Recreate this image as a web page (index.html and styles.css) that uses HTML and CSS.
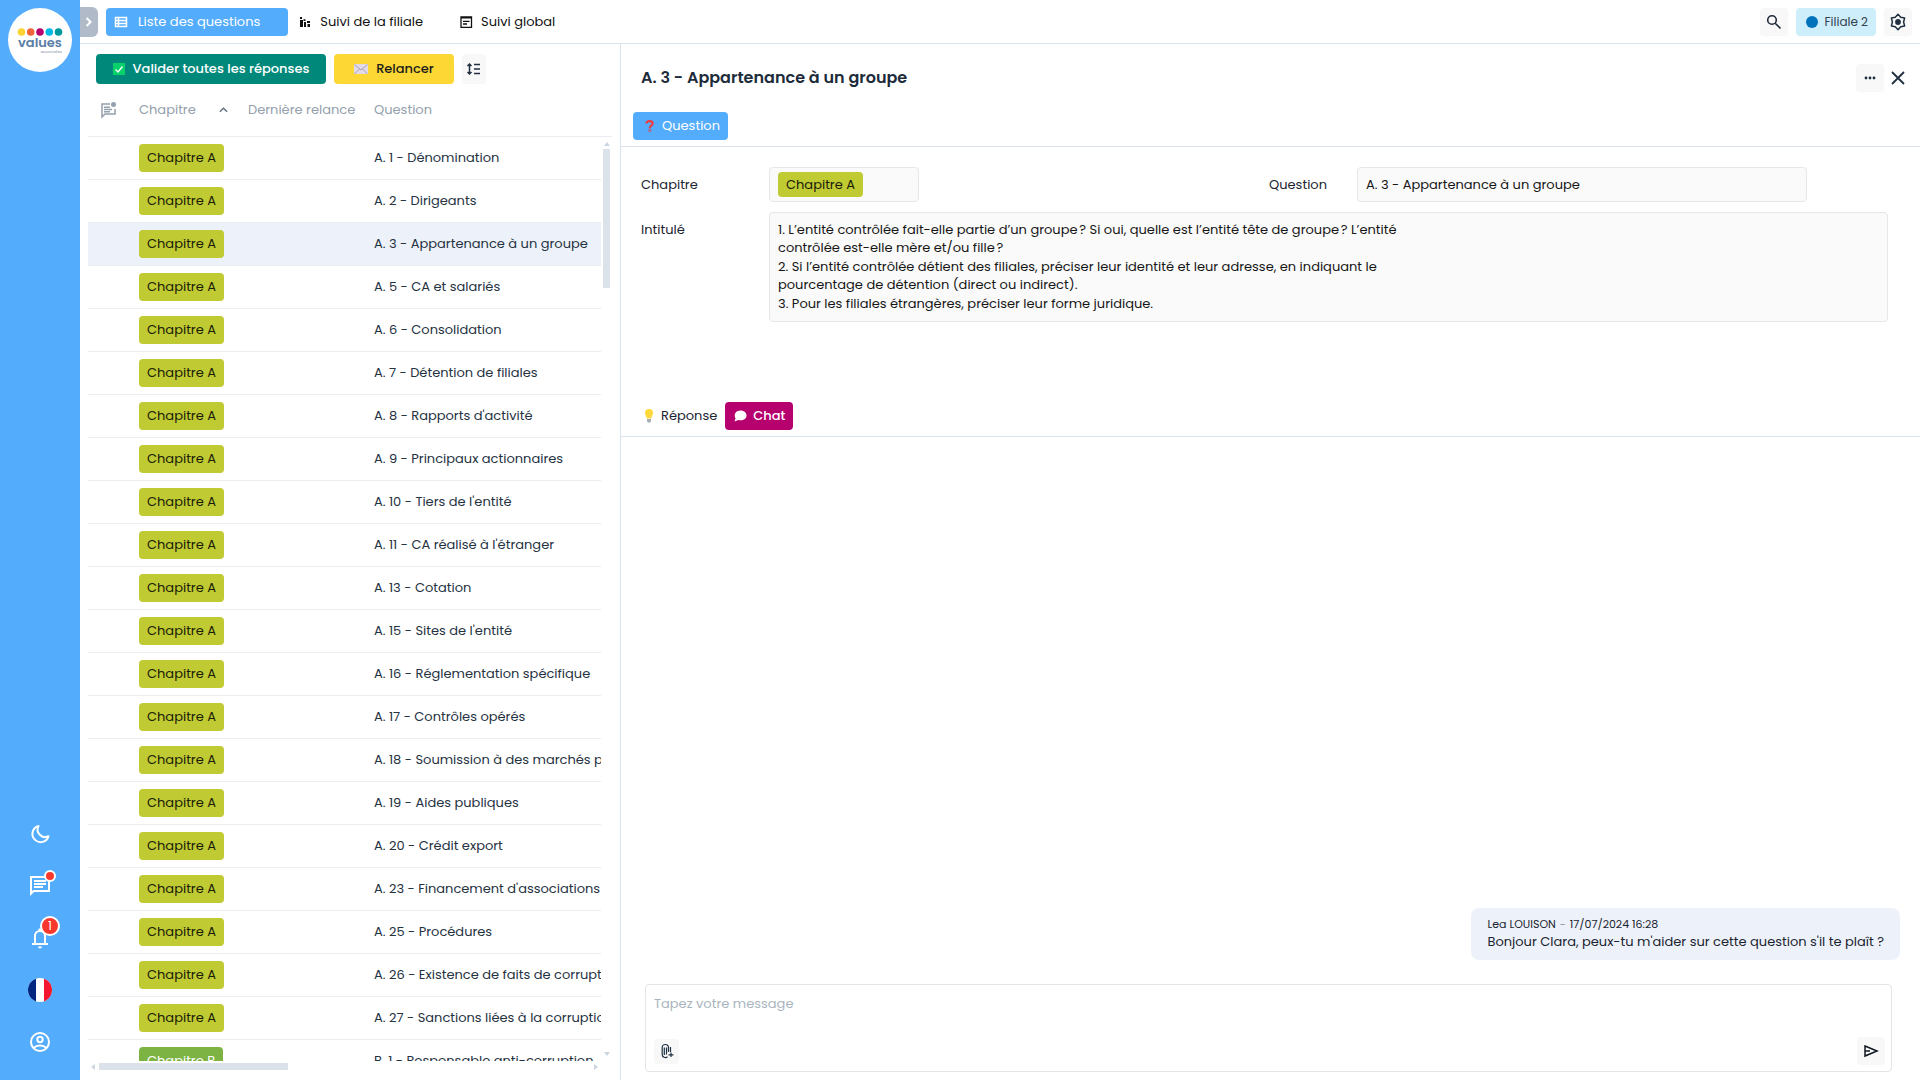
FILE: index.html
```html
<!DOCTYPE html>
<html lang="fr">
<head>
<meta charset="utf-8">
<title>Liste des questions</title>
<link rel="stylesheet" href="styles.css">
</head>
<body>
<div class="app">
  <aside class="rail">
    <a class="logo" href="#" aria-label="values associates">
      <svg viewBox="0 0 64 64" width="64" height="64">
        <circle cx="32" cy="32" r="32" fill="#fff"/>
        <circle cx="13.500" cy="24" r="3.800" fill="#fbd433"/><circle cx="22.700" cy="24" r="3.800" fill="#f0643c"/><circle cx="32" cy="24" r="3.800" fill="#b5006e"/><circle cx="41.300" cy="24" r="3.800" fill="#00b9e4"/><circle cx="50.500" cy="24" r="3.800" fill="#009a9c"/>
        <text x="32" y="39" class="logo-name">values</text>
        <text x="54" y="45" class="logo-sub">associates</text>
      </svg>
    </a>
    <nav class="rail-nav">
      <button class="rail-btn" aria-label="Mode sombre"><svg viewBox="0 0 24 24" width="24" height="24" fill="none" stroke="#fff" stroke-width="2"><path d="M10.500 4a8.200 8.200 0 1 0 10 10.200A7.500 7.500 0 0 1 10.500 4z" stroke-linejoin="round"/></svg></button>
      <button class="rail-btn" aria-label="Messages"><svg viewBox="0 0 24 24" width="24" height="24" fill="#fff"><path d="M4 4h16v12H5.200L4 17.200zM2 2v20l4-4h16V2zM6 12h9v2H6zm0-3h12v2H6zm0-3h12v2H6z" fill-rule="evenodd"/></svg><span class="dot"></span></button>
      <button class="rail-btn" aria-label="Notifications"><svg viewBox="0 0 24 24" width="24" height="24" fill="#fff"><path fill-rule="evenodd" d="M4 19v-2h2v-7a6 6 0 0 1 4.500-5.800V2.500h3v1.700A6 6 0 0 1 18 10v7h2v2zm4-2h8v-7a4 4 0 0 0-8 0zm2 3.500h4a2 2 0 0 1-4 0z"/></svg><span class="count">1</span></button>
      <button class="rail-btn" aria-label="Langue"><svg viewBox="0 0 24 24" width="24" height="24"><clipPath id="flag"><circle cx="12" cy="12" r="12"/></clipPath><g clip-path="url(#flag)"><path fill="#fff" d="M0 0h24v24H0z"/><path fill="#00267f" d="M0 0h8v24H0z"/><path fill="#f31830" d="M16 0h8v24h-8z"/></g></svg></button>
      <button class="rail-btn" aria-label="Compte"><svg viewBox="0 0 24 24" width="24" height="24" fill="none" stroke="#fff" stroke-width="2"><circle cx="12" cy="12" r="9"/><circle cx="12" cy="9.500" r="2.700"/><path d="M5.500 18c3.500-3.200 9.500-3.200 13 0"/></svg></button>
    </nav>
  </aside>
  <div class="main">
    <header class="topbar">
      <button class="expand" aria-label="Ouvrir le menu"><svg viewBox="0 0 10 14" width="8" height="12" fill="none" stroke="#fff" stroke-width="2.400"><path d="M2 2l5 5-5 5"/></svg></button>
      <nav class="tabs">
        <a class="tab tab-active" href="#"><svg viewBox="0 0 14 14" width="14" height="14" fill="none" stroke="#fff" stroke-width="1.500"><path d="M1.500 2.500h11v9h-11zM1.500 5.500h11M1.500 8.500h11M4.500 2.500v9"/></svg>Liste des questions</a>
        <a class="tab" href="#"><svg viewBox="0 0 14 14" width="14" height="14" fill="#111"><path d="M2 5h3v7H2zM6 7h2v5H6zM9.500 9H12v3H9.500zM2 2h2v2H2zM5.500 4.200h2v1.800h-2zM9 6h3v2H9z"/></svg>Suivi de la filiale</a>
        <a class="tab" href="#"><svg viewBox="0 0 14 14" width="14" height="14" fill="none" stroke="#111" stroke-width="1.300"><path d="M2 2h10.500v10.300H2zM2 2.900h10.500M4 6.300h6.500M4 9h4"/></svg>Suivi global</a>
      </nav>
      <div class="top-tools">
        <button class="icon-btn" aria-label="Rechercher"><svg viewBox="0 0 16 16" width="16" height="16" fill="none" stroke="#1f2937" stroke-width="1.600"><circle cx="6" cy="6" r="4.300"/><path d="M9.200 9.200L14.500 14.500"/></svg></button>
        <button class="branch"><i></i>Filiale 2</button>
        <button class="icon-btn" aria-label="Paramètres"><svg viewBox="0 0 18 18" width="18" height="18" fill="none" stroke="#1f2f3f" stroke-width="1.500" stroke-linejoin="round"><path d="M9 1.300l2.700 2.900 3.900.9-1 3.900 1 3.900-3.900.9L9 16.700l-2.700-2.900-3.900-.9 1-3.900-1-3.900 3.900-.9z"/><circle cx="9" cy="9" r="2.900" fill="#1f2f3f" stroke="none"/></svg></button>
      </div>
    </header>
    <div class="panes">
      <section class="list">
        <div class="actions">
          <button class="btn validate"><svg viewBox="0 0 12 14" width="12" height="14"><path fill="#06d16a" d="M0 1h12v12H0z"/><path d="M2.500 7.500L5 10l4.500-5.500" fill="none" stroke="#fff" stroke-width="1.300"/></svg>Valider toutes les réponses</button>
          <button class="btn remind"><svg viewBox="0 0 14 12" width="14" height="12"><path fill="#e2dae6" d="M0 1h14v10H0z"/><path d="M.5 1.500L7 7l6.500-5.500M.5 11l5-5m3 0l5 5" fill="none" stroke="#9b92a3" stroke-width=".8"/></svg>Relancer</button>
          <button class="icon-btn" aria-label="Hauteur des lignes"><svg viewBox="0 0 16 14" width="16" height="14" fill="none" stroke="#222f3e" stroke-width="1.500"><path d="M3.500 2v10M1.500 4l2-2 2 2M1.500 10l2 2 2-2M8 2.500h6M8 7h6M8 11.500h6"/></svg></button>
        </div>
        <div class="table-box">
        <table class="grid">
          <thead><tr>
            <th class="c-msg"><svg viewBox="0 0 18 18" width="18" height="18" fill="none" stroke="#94a0ab" stroke-width="1.500"><path d="M11 3H3v13l3-3h10V8M5 6.300h6M5 8.500h8M5 10.700h6"/><circle cx="14.500" cy="3.500" r="2.500" fill="#94a0ab" stroke="none"/></svg></th>
            <th class="c-chap"><span>Chapitre <svg viewBox="0 0 10 6" width="9" height="6" fill="none" stroke="#607080" stroke-width="1.600"><path d="M1 5l4-4 4 4"/></svg></span></th>
            <th class="c-last">Dernière relance</th>
            <th class="c-q">Question</th>
          </tr></thead>
          <tbody>
            <tr><td></td><td><b class="chip">Chapitre A</b></td><td></td><td>A. 1 - Dénomination</td></tr>
            <tr><td></td><td><b class="chip">Chapitre A</b></td><td></td><td>A. 2 - Dirigeants</td></tr>
            <tr class="selected"><td></td><td><b class="chip">Chapitre A</b></td><td></td><td>A. 3 - Appartenance à un groupe</td></tr>
            <tr><td></td><td><b class="chip">Chapitre A</b></td><td></td><td>A. 5 - CA et salariés</td></tr>
            <tr><td></td><td><b class="chip">Chapitre A</b></td><td></td><td>A. 6 - Consolidation</td></tr>
            <tr><td></td><td><b class="chip">Chapitre A</b></td><td></td><td>A. 7 - Détention de filiales</td></tr>
            <tr><td></td><td><b class="chip">Chapitre A</b></td><td></td><td>A. 8 - Rapports d'activité</td></tr>
            <tr><td></td><td><b class="chip">Chapitre A</b></td><td></td><td>A. 9 - Principaux actionnaires</td></tr>
            <tr><td></td><td><b class="chip">Chapitre A</b></td><td></td><td>A. 10 - Tiers de l'entité</td></tr>
            <tr><td></td><td><b class="chip">Chapitre A</b></td><td></td><td>A. 11 - CA réalisé à l'étranger</td></tr>
            <tr><td></td><td><b class="chip">Chapitre A</b></td><td></td><td>A. 13 - Cotation</td></tr>
            <tr><td></td><td><b class="chip">Chapitre A</b></td><td></td><td>A. 15 - Sites de l'entité</td></tr>
            <tr><td></td><td><b class="chip">Chapitre A</b></td><td></td><td>A. 16 - Réglementation spécifique</td></tr>
            <tr><td></td><td><b class="chip">Chapitre A</b></td><td></td><td>A. 17 - Contrôles opérés</td></tr>
            <tr><td></td><td><b class="chip">Chapitre A</b></td><td></td><td>A. 18 - Soumission à des marchés publics</td></tr>
            <tr><td></td><td><b class="chip">Chapitre A</b></td><td></td><td>A. 19 - Aides publiques</td></tr>
            <tr><td></td><td><b class="chip">Chapitre A</b></td><td></td><td>A. 20 - Crédit export</td></tr>
            <tr><td></td><td><b class="chip">Chapitre A</b></td><td></td><td>A. 23 - Financement d'associations</td></tr>
            <tr><td></td><td><b class="chip">Chapitre A</b></td><td></td><td>A. 25 - Procédures</td></tr>
            <tr><td></td><td><b class="chip">Chapitre A</b></td><td></td><td>A. 26 - Existence de faits de corruption</td></tr>
            <tr><td></td><td><b class="chip">Chapitre A</b></td><td></td><td>A. 27 - Sanctions liées à la corruption</td></tr>
            <tr><td></td><td><b class="chip chip-b">Chapitre B</b></td><td></td><td>B. 1 - Responsable anti-corruption</td></tr>
          </tbody>
        </table>
        <div class="vbar"><svg viewBox="0 0 6 4" width="6" height="4"><path fill="#ccd6e2" d="M0 4l3-4 3 4z"/></svg><i></i><svg viewBox="0 0 6 4" width="6" height="4"><path fill="#ccd6e2" d="M0 0l3 4 3-4z"/></svg></div>
        </div>
        <div class="hbar"><svg viewBox="0 0 4 6" width="4" height="6"><path fill="#ccd6e2" d="M4 0L0 3l4 3z"/></svg><i></i><svg viewBox="0 0 4 6" width="4" height="6"><path fill="#ccd6e2" d="M0 0l4 3-4 3z"/></svg></div>
      </section>
      <section class="detail">
        <div class="detail-head">
          <h1>A. 3 - Appartenance à un groupe</h1>
          <button class="icon-btn" aria-label="Plus"><svg viewBox="0 0 12 4" width="12" height="4" fill="#1f2f3f"><circle cx="2" cy="2" r="1.400"/><circle cx="6" cy="2" r="1.400"/><circle cx="10" cy="2" r="1.400"/></svg></button>
          <button class="icon-btn bare" aria-label="Fermer"><svg viewBox="0 0 14 14" width="14" height="14" fill="none" stroke="#1f2f3f" stroke-width="1.800"><path d="M1 1l12 12M13 1L1 13"/></svg></button>
        </div>
        <div class="sub-tabs">
          <button class="sub-tab blue"><svg viewBox="0 0 10 14" width="9" height="14" fill="none" stroke="#f03a3e" stroke-width="2.400"><path d="M1.500 4.200C1.500.700 8.500.700 8.500 4.200 8.500 6.500 5.300 6.500 5.300 9.500"/><circle cx="5.300" cy="12.200" r=".4"/></svg>Question</button>
        </div>
        <div class="form">
          <label class="f-label" for="chapitre">Chapitre</label>
          <output class="field" id="chapitre"><b class="chip">Chapitre A</b></output>
          <label class="f-label" for="question">Question</label>
          <input class="field" id="question" value="A. 3 - Appartenance à un groupe" readonly>
          <label class="f-label top" for="intitule">Intitulé</label>
          <output class="field long" id="intitule">
            <span>1. L’entité contrôlée fait-elle partie d’un groupe&#8239;? Si oui, quelle est l’entité tête de groupe&#8239;? L’entité<br>contrôlée est-elle mère et/ou fille&#8239;?</span>
            <span>2. Si l’entité contrôlée détient des filiales, préciser leur identité et leur adresse, en indiquant le<br>pourcentage de détention (direct ou indirect).</span>
            <span>3. Pour les filiales étrangères, préciser leur forme juridique.</span>
          </output>
        </div>
        <div class="sub-tabs reply">
          <button class="sub-tab plain"><svg viewBox="0 0 8 14" width="8" height="14"><path fill="#ffd93b" d="M4 0a4 4 0 0 1 4 4c0 2.500-1.500 3-1.800 5.500H1.800C1.500 7 0 6.500 0 4a4 4 0 0 1 4-4z"/><path fill="#a9adb5" d="M2 10h4v2.500L4 14l-2-1.500z"/></svg>Réponse</button>
          <button class="sub-tab pink"><svg viewBox="0 0 14 12" width="14" height="12"><path fill="#fff" d="M7.500.5c3.700 0 6 2.200 6 4.900s-2.300 4.900-6 4.900c-.8 0-1.500-.1-2.200-.3L1.500 11.500l1-3C.300 4 3.300.5 7.500.5z"/></svg>Chat</button>
        </div>
        <div class="chat">
          <article class="bubble">
            <div class="meta">Lea LOUISON <span>-</span> <time>17/07/2024 16:28</time></div>
            <p>Bonjour Clara, peux-tu m'aider sur cette question s'il te plaît ?</p>
          </article>
        </div>
        <form class="composer">
          <textarea placeholder="Tapez votre message" aria-label="Message" rows="1"></textarea>
          <div class="composer-tools">
            <button type="button" class="icon-btn small" aria-label="Joindre un fichier"><svg viewBox="0 0 14 16" width="14" height="16" fill="none" stroke="#1f2f3f" stroke-width="1.200"><path d="M6.500 4.500v7M4.300 12V4.500M2.200 4.500v7c0 2.800 3.500 3.800 5.300 2.300M2.200 4.500c0-4 6.300-4 6.300 0V9M10.500 4v5M11 9.500V14M8.500 11.800h5"/></svg></button>
            <button type="button" class="icon-btn" aria-label="Envoyer"><svg viewBox="0 0 16 14" width="16" height="14" fill="none" stroke="#101820" stroke-width="1.500"><path d="M2 2l12 5-12 5zM2 7h5"/></svg></button>
          </div>
        </form>
      </section>
    </div>
  </div>
</div>
</body>
</html>
```
FILE: styles.css
```css
* { box-sizing: border-box; }
body { margin: 0; font: 13px/18px Poppins, Inter, sans-serif; color: #1b2430; background: #fff; }
button { border: 0; background: none; padding: 0; font: inherit; color: inherit; cursor: pointer; display: flex; align-items: center; justify-content: center; }
a { color: inherit; text-decoration: none; }
svg { display: block; flex: none; }
.app { display: flex; height: 100vh; overflow: hidden; }

.rail { width: 80px; flex: none; background: #53acfc; display: flex; flex-direction: column; align-items: center; justify-content: space-between; padding: 8px 0 14px; }
.logo-name { font: 600 13px Poppins, Inter, sans-serif; fill: #5b7ea8; text-anchor: middle; }
.logo-sub { font: 4px Poppins, Inter, sans-serif; fill: #7d8fa8; text-anchor: end; }
.rail-nav { display: flex; flex-direction: column; gap: 4px; }
.rail-btn { width: 48px; height: 48px; position: relative; }
.dot, .count { position: absolute; border: 2px solid #fff; border-radius: 50%; background: #f8382c; color: #fff; }
.dot { width: 12px; height: 12px; left: 28px; top: 8px; }
.count { width: 20px; height: 20px; left: 24px; top: 2px; font-size: 12px; line-height: 16px; text-align: center; }

.main { flex: 1; min-width: 0; display: flex; flex-direction: column; }
.topbar { height: 44px; flex: none; display: flex; align-items: flex-start; border-bottom: 1px solid #dbe3ec; padding: 7px 8px 0 0; }
.expand { width: 18px; height: 30px; background: #b1bac8; border-radius: 0 6px 6px 0; }
.tabs { display: flex; padding-left: 8px; margin-top: 1px; }
.tab { height: 28px; display: flex; align-items: center; gap: 8px; padding: 0 26px 0 10px; border-radius: 4px; color: #111; }
.tab-active { background: #53acfc; color: #fff; padding: 0 28px 0 8px; gap: 10px; }
.top-tools { margin: 1px 0 0 auto; display: flex; gap: 8px; }
.icon-btn { width: 28px; height: 28px; border-radius: 4px; background: #f8f8f9; flex: none; }
.icon-btn.bare { background: none; }
.icon-btn.small { width: 25px; height: 25px; }
.branch { height: 28px; padding: 0 8px 0 10px; gap: 6px; border-radius: 4px; background: #cdeefa; font-size: 12px; color: #33404d; }
.branch i { width: 12px; height: 12px; border-radius: 50%; background: #0072bc; }

.panes { flex: 1; min-height: 0; display: flex; }
.list { width: 540px; flex: none; display: flex; flex-direction: column; padding: 10px 8px 8px 8px; }
.actions { display: flex; gap: 8px; padding-left: 8px; }
.actions .icon-btn { height: 30px; width: 24px; }
.btn { height: 30px; border-radius: 4px; gap: 8px; font-weight: 500; }
.validate { width: 230px; background: #00897b; color: #fff; }
.remind { width: 120px; background: #fdd835; color: #1c1c1c; }
.table-box { flex: 1; min-height: 0; display: flex; overflow: hidden; justify-content: space-between; position: relative; }
.grid { table-layout: fixed; width: 100%; height: max-content; border-collapse: collapse; color: #25323f; }
.grid th { height: 52px; padding: 0; text-align: left; font-weight: 400; color: #94a0ab; border-bottom: 1px solid #ebeef0; white-space: nowrap; }
.grid th span { display: flex; align-items: center; gap: 23px; }
.c-msg { width: 51px; }
.grid .c-msg { padding-left: 11px; }
.c-chap { width: 109px; }
.c-last { width: 126px; }
.grid td { height: 43px; padding: 0; white-space: nowrap; overflow: hidden; border-bottom: 1px solid #ebeef0; }
.selected { background: #edf2fa; }
.chip { display: inline-block; height: 28px; line-height: 28px; padding: 0 8px; border-radius: 4px; background: #c0ca33; color: #1a1c08; font-weight: 400; vertical-align: middle; }
.chip-b { background: #7cb342; color: #fff; }
.vbar { position: absolute; right: 0; top: 53px; bottom: 0; width: 11px; padding: 5px 2px; background: #fff; display: flex; flex-direction: column; align-items: center; }
.vbar i { width: 7px; height: 139px; margin: 3px 0 auto; background: #dbe2ea; }
.hbar { display: flex; align-items: center; padding: 0 14px 0 3px; height: 11px; }
.hbar i { width: 189px; height: 7px; margin: 0 auto 0 4px; background: #dbe2ea; }

.detail { flex: 1; min-width: 0; border-left: 1px solid #dbe3ec; display: flex; flex-direction: column; }
.detail-head { display: flex; align-items: center; padding: 20px 8px 0 20px; }
h1 { margin: 0 auto 0 0; font-size: 16px; line-height: 24px; font-weight: 600; color: #1d2b3a; }
.sub-tabs { display: flex; gap: 8px; padding: 20px 12px 6px; border-bottom: 1px solid #dbe3ec; }
.sub-tab { height: 28px; padding: 0 8px; border-radius: 4px; gap: 8px; font-size: 13px; }
.blue { background: #53acfc; color: #fff; padding-left: 12px; }
.plain { padding: 0 0 0 12px; }
.pink { background: #b5006e; color: #fff; font-weight: 500; gap: 6px; }
.form { display: grid; grid-template-columns: 128px 150px 1fr 88px 450px 81px; padding: 20px 32px 0 20px; row-gap: 10px; }
.f-label { line-height: 35px; }
.field { height: 35px; border: 1px solid #e6e7e9; border-radius: 4px; background: #fafafa; padding: 0 8px; font: inherit; color: #161616; display: flex; align-items: center; min-width: 0; }
.field .chip { height: 25px; line-height: 25px; }
.form > :nth-child(3) { grid-column: 4; }
.form > :nth-child(4) { grid-column: 5; }
.form .long { grid-column: 2 / 7; flex-direction: column; align-items: flex-start; gap: 1px; height: auto; padding: 8px; line-height: 18px; }
.form .top { grid-column: 1; }
.reply { padding-top: 80px; }
.chat { flex: 1; min-height: 0; display: flex; flex-direction: column; justify-content: flex-end; align-items: flex-end; padding: 0 20px 24px; }
.bubble { background: #edf2fa; border-radius: 8px; padding: 7px 16px 9px; }
.bubble p { margin: 0; }
.meta { font-size: 11px; }
.meta span { margin: 0 1px; color: #8f98a3; }
.composer { margin: 0 28px 8px 24px; border: 1px solid #e3e5e8; border-radius: 4px; padding: 10px 6px 6px 8px; }
textarea { display: block; width: 100%; height: 42px; border: 0; padding: 0; resize: none; font: inherit; outline: 0; }
textarea::placeholder { color: #a9b5be; opacity: 1; }
.composer-tools { display: flex; justify-content: space-between; align-items: center; }
```
